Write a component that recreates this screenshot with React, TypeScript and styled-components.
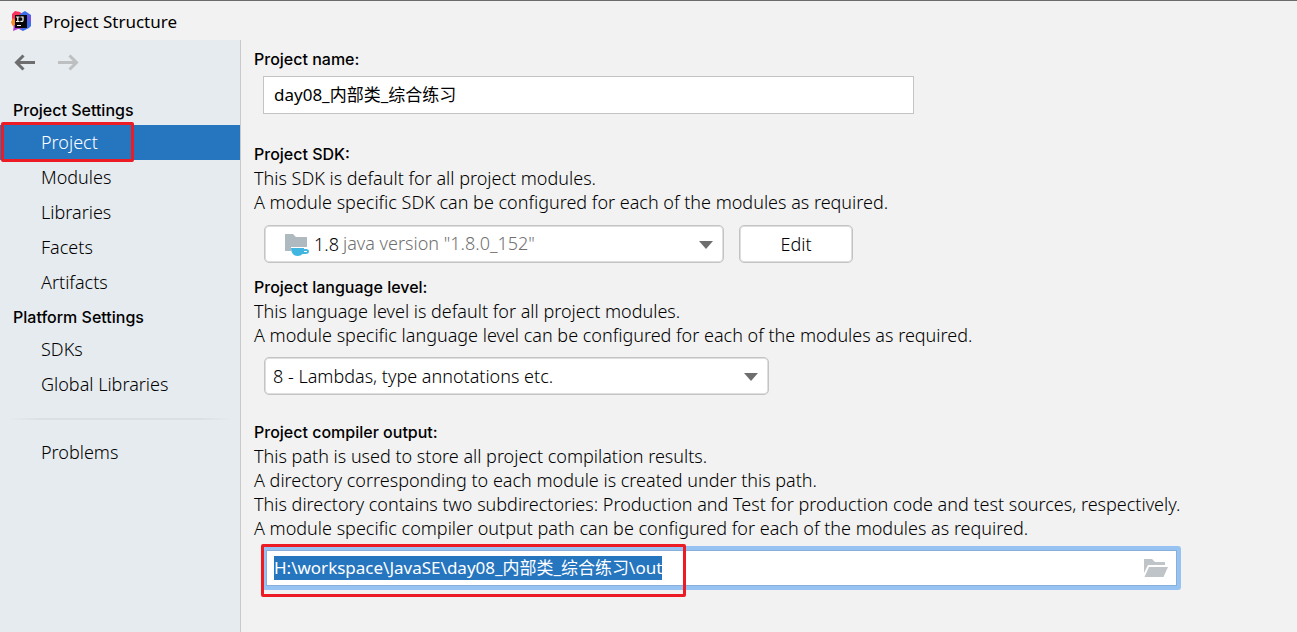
import React, { useEffect, useRef } from "react";
import styled, { createGlobalStyle } from "styled-components";

const GlobalStyle = createGlobalStyle`
  * { box-sizing: border-box; }
  html, body { margin: 0; background: #f2f2f2; }
  body, input, select, button {
    font-family: "Noto Sans", "Noto Sans CJK SC", sans-serif;
    font-size: 18px;
    font-weight: 320;
    color: #000;
  }
`;

const Dialog = styled.div`
  display: flex;
  flex-direction: column;
  min-height: 100vh;
  border-top: 1px solid #6b6b6b;
  background: #f2f2f2;
`;

const TitleBar = styled.header`
  display: flex;
  align-items: center;
  gap: 11px;
  height: 39px;
  padding: 2px 11px 0;
`;

const Title = styled.h1`
  margin: 0;
  font-size: 17px;
  font-weight: 400;
  line-height: 24px;
`;

const Body = styled.div`
  display: flex;
  flex: 1;
`;

const Sidebar = styled.nav`
  flex: 0 0 241px;
  border-right: 1px solid #c9c9c9;
  background: #e6ebef;
`;

const History = styled.div`
  display: flex;
  gap: 21px;
  padding: 12px 14px 0;
  height: 53px;
`;

const IconButton = styled.button`
  display: flex;
  width: 22px;
  height: 20px;
  padding: 0;
  border: 0;
  background: none;
`;

const GroupTitle = styled.h2`
  margin: 0;
  padding: 2px 0 0 13px;
  font: 500 16px/30px Inter, sans-serif;
`;

const NavList = styled.ul`
  margin: 0;
  padding: 0;
  list-style: none;
`;

const NavItem = styled.li`
  position: relative;
`;

const NavLink = styled.a<{ $active?: boolean }>`
  display: block;
  padding-left: 41px;
  line-height: 35px;
  text-decoration: none;
  color: ${(p) => (p.$active ? "#fff" : "#000")};
  background: ${(p) => (p.$active ? "#2675bf" : "transparent")};
`;

const Divider = styled.hr`
  height: 2px;
  margin: 16px 8px 15px;
  border: 0;
  background: linear-gradient(90deg, transparent, #dcdfe2 15%, #dcdfe2 85%, transparent);
`;

const Marker = styled.span<{ $inset: string }>`
  position: absolute;
  inset: ${(p) => p.$inset};
  border: 3px solid #ed1c24;
  border-radius: 2px;
  pointer-events: none;
`;

const Content = styled.main`
  flex: 1;
  min-width: 0;
  padding: 7px 16px 0 13px;
`;

const Section = styled.section<{ $after: number }>`
  margin-bottom: ${(p) => p.$after}px;
`;

const Label = styled.label`
  display: block;
  font: 500 16px/24px Inter, sans-serif;
`;

const Help = styled.p<{ $after: number }>`
  margin: 0 0 ${(p) => p.$after}px;
  line-height: 24px;
`;

const NameInput = styled.input`
  display: block;
  width: 100%;
  max-width: 651px;
  height: 38px;
  margin: 5px 0 0 9px;
  padding: 0 10px 3px;
  border: 1px solid #c4c4c4;
  background: #fff;
  outline: 0;
  font-size: 17px;
  font-weight: 400;
`;

const Row = styled.div`
  display: flex;
  gap: 15px;
  padding-left: 10px;
`;

const SelectBox = styled.div<{ $width: number }>`
  position: relative;
  flex: 0 1 ${(p) => p.$width}px;
`;

const Select = styled.select<{ $indent: number }>`
  display: block;
  appearance: none;
  width: 100%;
  height: 38px;
  padding: 0 40px 1px ${(p) => p.$indent}px;
  border: 1px solid #c4c4c4;
  border-radius: 5px;
  background: #fff;
  box-shadow: inset 0 0 0 1px #dedede;
`;

const Arrow = styled.svg`
  position: absolute;
  right: 11px;
  top: 16px;
  pointer-events: none;
`;

const SdkIcon = styled.svg`
  position: absolute;
  left: 20px;
  top: 8px;
  pointer-events: none;
`;

const SdkDetail = styled.span`
  position: absolute;
  left: 79px;
  top: 0;
  line-height: 37px;
  color: #707070;
  pointer-events: none;
`;

const Button = styled.button`
  width: 114px;
  height: 38px;
  padding: 0;
  border: 1px solid #c4c4c4;
  border-radius: 5px;
  background: #fff;
  box-shadow: inset 0 0 0 1px #dedede;
`;

const PathField = styled.div`
  position: relative;
  display: flex;
  align-items: center;
  max-width: 919px;
  height: 44px;
  margin-left: 8px;
  padding-right: 9px;
  border: 4px solid #97c3f3;
  border-radius: 3px;
  background: #fff;
  box-shadow: inset 0 0 0 1px #87afda;
`;

const PathInput = styled.input`
  flex: 1;
  min-width: 0;
  height: 24px;
  padding: 0 0 0 8px;
  border: 0;
  outline: 0;
  background: none;
  font-size: 17px;
  font-weight: 400;
  line-height: 24px;
  &::selection { color: #fff; background: #2675bf; }
`;

const IdeaLogo = () => (
  <svg width="21" height="21" viewBox="0 0 21 21" aria-hidden="true">
    <path d="M1 3 4 0 9 1 12 4 11 10 4 13 1 10Z" fill="#fc315c" />
    <path d="M0 11 2 7 7 12 4 17 1 14Z" fill="#f78b2c" />
    <path d="M9 3 14 0 20 4 20 15 18 17 12 20 6 17Z" fill="#3b6fe8" />
    <path d="M3 14 8 15 11 18 7 18 2 20Z" fill="#b13dd0" />
    <path d="M16 3 20 5 20 12 17 10Z" fill="#6b57e5" />
    <path d="M4 4H16V17H4Z" fill="#080808" />
    <path d="M5 6H8.500M6.800 6v4.500M5 10.500H8.500M9.500 6H12V9.500Q12 10.700 9.300 10.300" fill="none" stroke="#fff" strokeWidth="1.200" />
    <path d="M6 14.500h4" stroke="#fff" strokeWidth="1" />
  </svg>
);

const ArrowIcon = ({ forward }: { forward?: boolean }) => (
  <svg width="22" height="20" viewBox="0 0 22 20" fill="none" stroke={forward ? "#bdbfc1" : "#6e6e6e"} strokeWidth="3">
    <path d={forward ? "M1 10.500H19M12.500 3.500 19.500 10.500 12.500 17.500" : "M21 10.500H3M9.500 3.500 2.500 10.500 9.500 17.500"} />
  </svg>
);

const DropArrow = () => (
  <Arrow width="14" height="8" viewBox="0 0 14 8" aria-hidden="true">
    <path d="M0 0H14L7 8Z" fill="#6e6e6e" />
  </Arrow>
);

const FolderIcon = () => (
  <svg width="24" height="18" viewBox="0 0 24 18" aria-hidden="true">
    <path d="M0 14V0H8L11 3H21V6H4Z" fill="#bfc4c8" />
    <path d="M5 8H24L19.500 18H.500Z" fill="#bfc4c8" />
  </svg>
);

const projectLinks = ["Project", "Modules", "Libraries", "Facets", "Artifacts"];
const platformLinks = ["SDKs", "Global Libraries"];

export default function App() {
  const path = useRef<HTMLInputElement>(null);

  useEffect(() => {
    path.current?.focus();
    path.current?.select();
  }, []);

  return (
    <>
      <GlobalStyle />
      <Dialog>
        <TitleBar>
          <IdeaLogo />
          <Title>Project Structure</Title>
        </TitleBar>
        <Body>
          <Sidebar>
            <History>
              <IconButton aria-label="Back"><ArrowIcon /></IconButton>
              <IconButton aria-label="Forward"><ArrowIcon forward /></IconButton>
            </History>
            <GroupTitle>Project Settings</GroupTitle>
            <NavList>
              {projectLinks.map((name, i) => (
                <NavItem key={name}>
                  <NavLink href="#" $active={i === 0}>{name}</NavLink>
                  {i === 0 && <Marker $inset="-3px 106px -2px 1px" />}
                </NavItem>
              ))}
            </NavList>
            <GroupTitle>Platform Settings</GroupTitle>
            <NavList>
              {platformLinks.map((name) => (
                <NavItem key={name}><NavLink href="#">{name}</NavLink></NavItem>
              ))}
            </NavList>
            <Divider />
            <NavLink href="#">Problems</NavLink>
          </Sidebar>
          <Content>
            <Section $after={28}>
              <Label htmlFor="name">Project name:</Label>
              <NameInput id="name" defaultValue="day08_内部类_综合练习" />
            </Section>
            <Section $after={12}>
              <Label htmlFor="sdk">Project SDK:</Label>
              <Help $after={11}>
                This SDK is default for all project modules.<br />
                A module specific SDK can be configured for each of the modules as required.
              </Help>
              <Row>
                <SelectBox $width={460}>
                  <Select id="sdk" $indent={49}><option>1.8</option></Select>
                  <SdkIcon width="26" height="24" viewBox="0 0 26 24" aria-hidden="true">
                    <path d="M1 1H9L12 4H23V14H7V18H1Z" fill="#afb9c0" />
                    <path d="M7 15H20V16H22Q25 16 25 18.500T21 21H18.500Q17 23 13.500 23T8.500 20.500Q7 18.500 7 15Z" fill="#40b6e0" />
                    <path d="M20 18H23V19H20Z" fill="#fff" />
                  </SdkIcon>
                  <SdkDetail>java version "1.8.0_152"</SdkDetail>
                  <DropArrow />
                </SelectBox>
                <Button>Edit</Button>
              </Row>
            </Section>
            <Section $after={25}>
              <Label htmlFor="level">Project language level:</Label>
              <Help $after={10}>
                This language level is default for all project modules.<br />
                A module specific language level can be configured for each of the modules as required.
              </Help>
              <Row>
                <SelectBox $width={505}>
                  <Select id="level" $indent={8}><option>8 - Lambdas, type annotations etc.</option></Select>
                  <DropArrow />
                </SelectBox>
              </Row>
            </Section>
            <Section $after={0}>
              <Label htmlFor="output">Project compiler output:</Label>
              <Help $after={6}>
                This path is used to store all project compilation results.<br />
                A directory corresponding to each module is created under this path.<br />
                This directory contains two subdirectories: Production and Test for production code and test sources, respectively.<br />
                A module specific compiler output path can be configured for each of the modules as required.
              </Help>
              <PathField>
                <PathInput id="output" ref={path} defaultValue="H:\workspace\JavaSE\day08_内部类_综合练习\out" />
                <FolderIcon />
                <Marker $inset="-6px 491px -11px -5px" />
              </PathField>
            </Section>
          </Content>
        </Body>
      </Dialog>
    </>
  );
}
